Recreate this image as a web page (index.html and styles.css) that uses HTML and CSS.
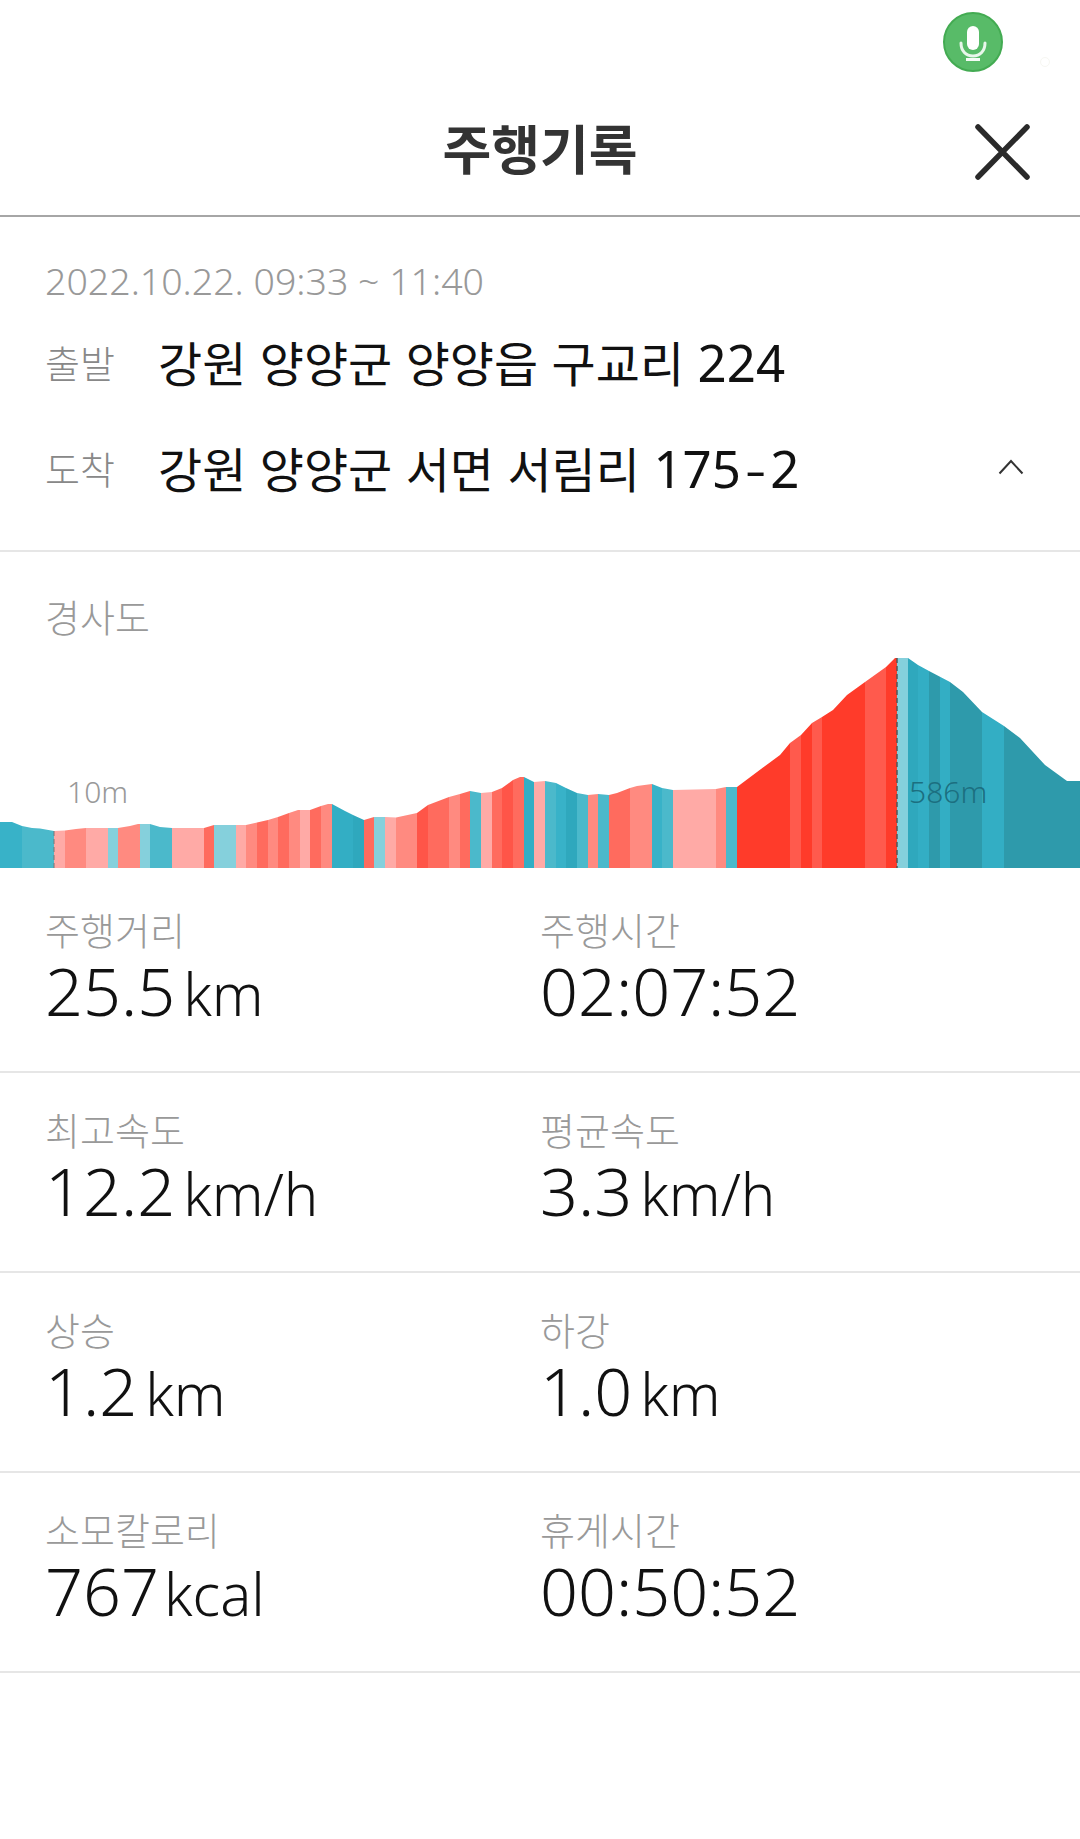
FILE: index.html
```html
<!DOCTYPE html>
<html lang="ko">
<head>
    <meta charset="UTF-8">
    <meta name="viewport" content="width=device-width, initial-scale=1.0">
    <title>주행기록</title>
    <link rel="stylesheet" href="styles.css">
</head>
<body>
    <div class="status_bar">
        <div class="mic">
            <svg width="30" height="42" viewBox="0 0 30 42">
                <rect x="9" y="5" width="12" height="24" rx="6" fill="#fff"/>
                <path d="M3 22c0 8 5 13 12 13s12-5 12-13" fill="none" stroke="#e8f6ea" stroke-width="3" stroke-linecap="round"/>
                <rect x="8" y="37" width="14" height="3" fill="#f4fbf5"/>
            </svg>
        </div>
        <span class="mic_ghost"></span>
    </div>

    <header class="title_bar">
        <h1>주행기록</h1>
        <svg class="close_icon" width="56" height="56" viewBox="0 0 56 56">
            <path d="M3 3L52 53M52 3L3 53" stroke="#2a2a2a" stroke-width="5.500" stroke-linecap="round"/>
        </svg>
    </header>

    <section class="route">
        <p class="route_date">2022.10.22. 09:33 ~ 11:40</p>
        <div class="route_row">
            <span class="route_label">출발</span>
            <span class="route_addr">강원 양양군 양양읍 구교리 <span class="addr_num">224</span></span>
        </div>
        <div class="route_row route_row_last">
            <span class="route_label">도착</span>
            <span class="route_addr">강원 양양군 서면 서림리 <span class="addr_num">175<span class="addr_dash">-</span>2</span></span>
            <svg class="chevron" width="26" height="16" viewBox="0 0 26 16">
                <path d="M1.500 14.500L13 2L24.500 14.500" fill="none" stroke="#333" stroke-width="2"/>
            </svg>
        </div>
    </section>

    <section class="slope">
        <h2>경사도</h2>
        <div class="chart">
            <svg id="chart_svg" width="1080" height="210" viewBox="0 658 1080 210"></svg>
            <span class="chart_min">10m</span>
            <span class="chart_max">586m</span>
        </div>
    </section>

    <section class="stats">
        <div class="stat_row">
            <div class="stat"><p class="stat_label">주행거리</p><p class="stat_value">25.5<span class="unit">km</span></p></div>
            <div class="stat"><p class="stat_label">주행시간</p><p class="stat_value">02:07:52</p></div>
        </div>
        <div class="stat_row">
            <div class="stat"><p class="stat_label">최고속도</p><p class="stat_value">12.2<span class="unit">km/h</span></p></div>
            <div class="stat"><p class="stat_label">평균속도</p><p class="stat_value">3.3<span class="unit">km/h</span></p></div>
        </div>
        <div class="stat_row">
            <div class="stat"><p class="stat_label">상승</p><p class="stat_value">1.2<span class="unit">km</span></p></div>
            <div class="stat"><p class="stat_label">하강</p><p class="stat_value">1.0<span class="unit">km</span></p></div>
        </div>
        <div class="stat_row">
            <div class="stat"><p class="stat_label">소모칼로리</p><p class="stat_value">767<span class="unit unit_kcal">kcal</span></p></div>
            <div class="stat"><p class="stat_label">휴게시간</p><p class="stat_value">00:50:52</p></div>
        </div>
    </section>

    <script src="chart.js"></script>
</body>
</html>
```

FILE: styles.css
```css
*{
    box-sizing: border-box;
}

body{
    margin: 0;
    background-color: white;
    font-family: 'Noto Sans', 'Noto Sans CJK KR', sans-serif;
    font-weight: 300;
}

p, h1, h2{
    margin: 0;
}

.status_bar{
    height: 82px;
    padding: 12px 77px 0 0;
    display: flex;
    justify-content: flex-end;
    position: relative;
}

.mic{
    width: 60px;
    height: 60px;
    border-radius: 50%;
    background-color: #58bb68;
    border: 2px solid #43ab52;
    display: flex;
    align-items: center;
    justify-content: center;
}

.mic_ghost{
    position: absolute;
    left: 1040px;
    top: 57px;
    width: 10px;
    height: 10px;
    border-radius: 50%;
    border: 1px solid #f7f7f2;
}

.title_bar{
    height: 135px;
    border-bottom: 2px solid #a6a6a6;
    display: flex;
    align-items: center;
    justify-content: center;
    position: relative;
}

.title_bar h1{
    font-family: 'Noto Sans CJK KR', sans-serif;
    font-size: 53px;
    font-weight: 700;
    color: #333;
    margin-top: -4px;
}

.close_icon{
    position: absolute;
    left: 975px;
    top: 42px;
}

.route{
    height: 335px;
    padding: 44px 45px 0;
    border-bottom: 2px solid #e6e6e6;
}

.route_date{
    font-size: 37.500px;
    line-height: 40px;
    color: #999;
}

.route_row{
    display: flex;
    align-items: center;
    height: 64px;
    margin-top: 28px;
}

.route_row_last{
    margin-top: 42px;
}

.route_label{
    font-family: 'Noto Sans CJK KR', sans-serif;
    width: 113px;
    font-size: 38px;
    color: #888;
}

.route_addr{
    font-family: 'Noto Sans CJK KR', sans-serif;
    font-size: 48px;
    font-weight: 400;
    color: #111;
}

.addr_num{
    font-family: 'Noto Sans', sans-serif;
    font-size: 51px;
}

.addr_dash{
    font-size: 66px;
    font-weight: 300;
    line-height: 0;
    vertical-align: -4px;
    margin: 0 4px;
}

.chevron{
    margin-left: auto;
    margin-right: 11px;
}

.slope{
    height: 317px;
    position: relative;
}

.slope h2{
    font-family: 'Noto Sans CJK KR', sans-serif;
    font-size: 38px;
    font-weight: 300;
    line-height: 50px;
    color: #999;
    padding: 39px 0 0 45px;
}

.chart{
    position: absolute;
    left: 0;
    top: 106px;
    width: 1080px;
    height: 210px;
}

.chart svg{
    display: block;
}

.chart_min, .chart_max{
    position: absolute;
    top: 115px;
    font-size: 30px;
    line-height: 38px;
}

.chart_min{
    left: 67px;
    color: #999;
}

.chart_max{
    left: 909px;
    color: #1c6f80;
}

.stats{
    padding-top: 4px;
}

.stat_row{
    height: 200px;
    padding-top: 34px;
    border-bottom: 2px solid #e6e6e6;
    display: grid;
    grid-template-columns: 495px 1fr;
    padding-left: 45px;
}

.stat_label{
    font-family: 'Noto Sans CJK KR', sans-serif;
    font-size: 38px;
    line-height: 44px;
    color: #999;
}

.stat_value{
    font-size: 66.500px;
    line-height: 78px;
    color: #111;
}

.unit{
    font-size: 58px;
    margin-left: 8px;
}

.unit_kcal{
    margin-left: 5px;
}
```

FILE: chart.js
```js
const chart_svg = document.getElementById('chart_svg');

// elevation outline, x / y in page pixels
const profile = [
    [0,822],[12,822],[22,826],[32,828],[40,828.500],[54,831],[65,830.500],[76,829],[86,828],[118,828],
    [130,826],[138,824],[150,824],[160,827],[172,828],[204,828],[214,825],[246,825],[257,822.500],[268,820],
    [278,817],[289,813],[298,810],[310,810],[321,806],[328,804],[332,804],[345,811],[353,815],[364,820],
    [374,817],[385,817],[396,817.500],[417,813],[428,805],[449,797],[460,794],[470,791],[481,793],[492,792],
    [502,788],[513,780],[520,777],[524,777],[534,782],[545,781],[556,783],[566,788],[577,793],[588,795],
    [598,794],[609,795],[617,793],[630,788],[637,786],[652,784],[662,788],[673,790],[716,789],[726,787],
    [737,787],[753,775],[780,755],[790,743],[801,735],[812,723],[822,717],[833,710],[847,695],[865,682],
    [886,667],[895,658],[908,658],[918,665],[929,671],[950,682],[963,692],[982,712],[1004,726],[1020,738],
    [1045,765],[1067,781],[1080,781]
];

const teal_a = '#38b2c8', teal_b = '#4bb9cb', teal_c = '#85d0dc', teal_d = '#2fa8bd', teal_e = '#2e9aab', teal_f = '#33aec4';
const red_a = '#ffaaa6', red_b = '#ff8a80', red_c = '#ff6b5e', red_d = '#ff5548', red_e = '#ff3b2a', red_f = '#ff5a4d';

// color bands, each one runs up to the given x
const bands = [
    [22,teal_a],[54,teal_b],[65,red_a],[86,red_b],[108,red_a],[118,teal_c],[140,red_b],[150,teal_c],[172,teal_b],[204,red_a],
    [214,red_c],[236,teal_c],[246,red_a],[257,red_b],[268,red_c],[278,red_b],[289,red_c],[300,red_b],[310,red_a],[321,red_c],
    [332,red_b],[353,teal_f],[364,teal_d],[374,red_c],[385,teal_c],[396,red_a],[417,red_b],[428,red_d],[449,red_c],[460,red_b],
    [470,red_c],[481,teal_b],[492,red_a],[502,red_c],[513,red_d],[524,red_c],[534,teal_f],[545,red_a],[556,teal_b],[566,teal_a],
    [577,teal_d],[588,teal_b],[598,red_b],[609,teal_b],[630,red_c],[652,red_b],[662,teal_a],[673,teal_b],[716,red_a],[726,red_b],
    [737,teal_b],[790,red_e],[801,red_f],[812,red_e],[822,red_f],[865,red_e],[886,red_f],[897,red_e],[908,teal_c],[918,teal_d],
    [929,teal_f],[940,teal_e],[950,teal_f],[982,teal_e],[1004,teal_f],[1080,teal_e]
];

const outline = profile.map(function(p){ return p.join(','); }).join(' ') + ' 1080,868 0,868';

let svg_html = '<defs><clipPath id="hill"><polygon points="' + outline + '"/></clipPath></defs><g clip-path="url(#hill)">';

let start_x = 0;
bands.forEach(function(band){
    svg_html += '<rect x="' + start_x + '" y="658" width="' + (band[0] - start_x) + '" height="210" fill="' + band[1] + '"/>';
    start_x = band[0];
});

svg_html += '</g>';
svg_html += '<path d="M54 831V868" stroke="#777" stroke-width="1" stroke-dasharray="5 3"/>';
svg_html += '<path d="M897 658V868" stroke="#555" stroke-width="1.500" stroke-dasharray="5 3"/>';

chart_svg.innerHTML = svg_html;
```
